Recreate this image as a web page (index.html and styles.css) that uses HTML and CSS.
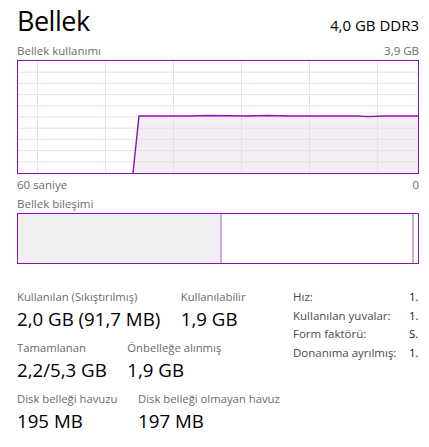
FILE: index.html
```html
<!DOCTYPE html>
<html lang="tr">
<head>
<meta charset="utf-8">
<link rel="stylesheet" href="styles.css">
</head>
<body>
<div class="page">
  <header class="head">
    <h1 class="title">Bellek</h1>
    <div class="spec">4,0 GB DDR3</div>
  </header>
  <div class="cap-row"><span>Bellek kullanımı</span><span>3,9 GB</span></div>
  <div class="chart">
    <svg width="400" height="112" viewBox="0 0 400 112" preserveAspectRatio="none">
      <polygon class="area" points="115,112 121,55 170,55 190,54.5 230,55 250,54.5 270,55 340,55 350,55.6 365,55 400,55 400,112"/>
      <g class="grid">
        <line x1="0" y1="11.2" x2="400" y2="11.2"/>
        <line x1="0" y1="22.4" x2="400" y2="22.4"/>
        <line x1="0" y1="33.6" x2="400" y2="33.6"/>
        <line x1="0" y1="44.8" x2="400" y2="44.8"/>
        <line x1="0" y1="56" x2="400" y2="56"/>
        <line x1="0" y1="67.2" x2="400" y2="67.2"/>
        <line x1="0" y1="78.4" x2="400" y2="78.4"/>
        <line x1="0" y1="89.6" x2="400" y2="89.6"/>
        <line x1="0" y1="100.8" x2="400" y2="100.8"/>
        <line x1="19.5" y1="0" x2="19.5" y2="112"/>
        <line x1="87.5" y1="0" x2="87.5" y2="112"/>
        <line x1="155.5" y1="0" x2="155.5" y2="112"/>
        <line x1="223.5" y1="0" x2="223.5" y2="112"/>
        <line x1="291.5" y1="0" x2="291.5" y2="112"/>
        <line x1="359.5" y1="0" x2="359.5" y2="112"/>
      </g>
      <polyline class="line" points="115,112 121,55 170,55 190,54.5 230,55 250,54.5 270,55 340,55 350,55.6 365,55 400,55"/>
    </svg>
  </div>
  <div class="cap-row cap-row--below"><span>60 saniye</span><span>0</span></div>
  <div class="cap-row cap-row--section"><span>Bellek bileşimi</span></div>
  <div class="comp">
    <div class="comp-used"></div>
    <div class="comp-div"></div>
    <div class="comp-free"></div>
    <div class="comp-div"></div>
    <div class="comp-end"></div>
  </div>
  <section class="stats">
    <div class="stats-left">
      <div class="stat-row">
        <div class="stat"><div class="label">Kullanılan (Sıkıştırılmış)</div><div class="value">2,0 GB (91,7 MB)</div></div>
        <div class="stat"><div class="label">Kullanılabilir</div><div class="value">1,9 GB</div></div>
      </div>
      <div class="stat-row">
        <div class="stat"><div class="label">Tamamlanan</div><div class="value">2,2/5,3 GB</div></div>
        <div class="stat"><div class="label">Önbelleğe alınmış</div><div class="value">1,9 GB</div></div>
      </div>
      <div class="stat-row">
        <div class="stat"><div class="label">Disk belleği havuzu</div><div class="value">195 MB</div></div>
        <div class="stat"><div class="label">Disk belleği olmayan havuz</div><div class="value">197 MB</div></div>
      </div>
    </div>
    <dl class="props">
      <dt>Hız:</dt><dd>1.</dd>
      <dt>Kullanılan yuvalar:</dt><dd>1.</dd>
      <dt>Form faktörü:</dt><dd>S.</dd>
      <dt>Donanıma ayrılmış:</dt><dd>1.</dd>
    </dl>
  </section>
</div>
</body>
</html>
```

FILE: styles.css
```css
* { box-sizing: border-box; }
html, body { margin: 0; padding: 0; background: #fff; }
body {
  font-family: "Open Sans", "Noto Sans", sans-serif;
  color: #000;
  width: 429px;
  height: 447px;
  overflow: hidden;
}
.page {
  padding: 3px 10px 0 17px;
}
.head {
  display: flex;
  justify-content: space-between;
  align-items: baseline;
}
.title {
  margin: 0;
  font-weight: 400;
  font-size: 27px;
  line-height: 36px;
  letter-spacing: -0.5px;
}
.spec {
  font-size: 15px;
}
.cap-row {
  display: flex;
  justify-content: space-between;
  font-size: 11.5px;
  line-height: 15px;
  color: #6b6b6b;
  margin-top: 4px;
}
.cap-row--below { margin-top: 3px; }
.cap-row--section { margin-top: 4px; }
.chart {
  width: 402px;
  height: 114px;
  border: 1px solid #8b12ae;
  margin-top: 2px;
}
.chart svg { display: block; }
.grid line { stroke: #e9dcef; stroke-width: 1; }
.area { fill: #f2eef4; }
.line { fill: none; stroke: #8b12ae; stroke-width: 1.4; }
.comp {
  display: flex;
  width: 402px;
  height: 51px;
  border: 1px solid #8b12ae;
  margin-top: 2px;
}
.comp-used { width: 202px; background: #f2eff3; }
.comp-div { width: 2px; background: #cfa9de; }
.comp-free { flex: 1; background: #fff; }
.comp-end { width: 4px; background: #fff; }
.stats {
  display: flex;
  justify-content: space-between;
  align-items: flex-start;
  margin-top: 25px;
}
.stats-left {
  display: flex;
  flex-direction: column;
  gap: 9px;
}
.stat-row {
  display: flex;
  gap: 20.5px;
}
.label {
  font-size: 11.3px;
  line-height: 16px;
  color: #6b6b6b;
}
.value {
  font-size: 18.7px;
  line-height: 25px;
  margin-top: 1px;
}
.props {
  margin: 0;
  display: grid;
  grid-template-columns: auto 10px;
  align-content: start;
  column-gap: 8px;
  row-gap: 2px;
  font-size: 11.5px;
  line-height: 16.5px;
  overflow: hidden;
  width: 126px;
}
.props dt { color: #4a4a4a; }
.props dd { margin: 0; color: #2a0a35; }
```
